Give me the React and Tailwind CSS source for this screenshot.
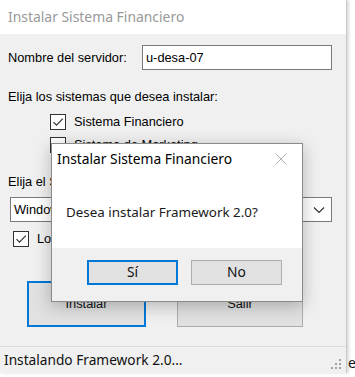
import React from 'react'

const ui = { fontFamily: '"Liberation Sans", Arial, sans-serif' }
const segoe = { fontFamily: '"Noto Sans", "Open Sans", sans-serif' }

function Check({ checked }) {
  return (
    <span className="w-4 h-4 border border-[#333] bg-white flex items-center justify-center shrink-0">
      {checked && (
        <svg width="12" height="12" viewBox="0 0 12 12" fill="none">
          <path d="M1.5 6.2l3 3L10.8 2.6" stroke="#333" strokeWidth="1.2" />
        </svg>
      )}
    </span>
  )
}

function WinButton({ children, focused, className = '' }) {
  return (
    <div
      className={
        'flex items-center justify-center bg-[#e1e1e1] text-[#111] ' +
        (focused ? 'border-2 border-[#0078d7] ' : 'border border-[#adadad] ') +
        className
      }
    >
      {children}
    </div>
  )
}

export default function App() {
  return (
    <div className="relative w-[355px] h-[377px] bg-white overflow-hidden">
      <div className="w-[347px] h-[373px] flex flex-col bg-[#f0f0f0] border-r border-[#c8c8c8] shadow-[2px_0_3px_rgba(0,0,0,0.15)]">
        <div className="h-[34px] shrink-0 bg-white flex items-center pl-[8px] text-[13.9px] text-[#999]" style={segoe}>
          Instalar Sistema Financiero
        </div>

        <div className="flex-1 flex flex-col text-[12.8px] leading-[16px] text-black" style={ui}>
          <div className="flex items-center mt-[11px] h-[25px]">
            <span className="ml-[8px] w-[134px]">Nombre del servidor:</span>
            <div className="w-[190px] h-[25px] bg-white border border-[#7a7a7a] flex items-center pl-[3px]">u-desa-07</div>
          </div>

          <div className="ml-[8px] mt-[19px]">Elija los sistemas que desea instalar:</div>

          <div className="flex items-center gap-[8px] ml-[50px] mt-[9px]">
            <Check checked />
            <span>Sistema Financiero</span>
          </div>
          <div className="flex items-center gap-[8px] ml-[50px] mt-[7px]">
            <Check />
            <span>Sistema de Marketing</span>
          </div>

          <div className="ml-[8px] mt-[21px]">Elija el Sistema Operativo:</div>

          <div className="ml-[10px] mt-[7px] w-[322px] h-[25px] bg-white border border-[#7a7a7a] flex items-center justify-between pl-[3px] pr-[6px]">
            <span>Windows Server 2008</span>
            <svg width="12" height="8" viewBox="0 0 12 8" fill="none">
              <path d="M1 1.5l5 5 5-5" stroke="#333" strokeWidth="1.2" />
            </svg>
          </div>

          <div className="flex items-center gap-[8px] ml-[13px] mt-[9px]">
            <Check checked />
            <span>Log de instalación</span>
          </div>

          <div className="flex mt-[34px] ml-[27px] gap-[31px]">
            <WinButton focused className="w-[119px] h-[46px]">Instalar</WinButton>
            <WinButton className="w-[126px] h-[46px]">Salir</WinButton>
          </div>

          <div className="mt-[19px] border-t border-[#dcdcdc]" />

          <div className="flex items-center justify-between h-[26px] pl-[4px] pr-[4px]">
            <span className="text-[13.7px] text-[#111]" style={segoe}>Instalando Framework 2.0...</span>
            <svg width="14" height="14" viewBox="0 0 14 14" className="mt-[8px]">
              {[[11, 2], [11, 6], [7, 6], [11, 10], [7, 10], [3, 10]].map(([x, y], i) => (
                <rect key={i} x={x} y={y} width="2" height="2" fill="#a0a0a0" />
              ))}
            </svg>
          </div>
        </div>
      </div>

      <span className="absolute left-[348px] top-[352px] text-[14px] text-[#111]" style={segoe}>er</span>

      <div
        className="absolute left-[51px] top-[143px] w-[252px] h-[159px] bg-white border border-[#8a8a8a] shadow-[0_4px_16px_rgba(0,0,0,0.25)] flex flex-col"
        style={segoe}
      >
        <div className="flex items-center justify-between h-[30px] pl-[5px] pr-[15px] text-[13.8px] text-black">
          <span>Instalar Sistema Financiero</span>
          <svg width="12" height="12" viewBox="0 0 12 12" fill="none">
            <path d="M0.5 0.5l11 11M11.5 0.5l-11 11" stroke="#b0b0b0" strokeWidth="1" />
          </svg>
        </div>
        <div className="flex-1 pl-[14px] pt-[28px] text-[13.4px] text-[#1a1a1a]">Desea instalar Framework 2.0?</div>
        <div className="h-[53px] bg-[#f0f0f0] flex items-start pt-[12px] pl-[35px] gap-[13px] text-[13.8px]">
          <WinButton focused className="w-[91px] h-[25px]">Sí</WinButton>
          <WinButton className="w-[91px] h-[25px]">No</WinButton>
        </div>
      </div>
    </div>
  )
}
